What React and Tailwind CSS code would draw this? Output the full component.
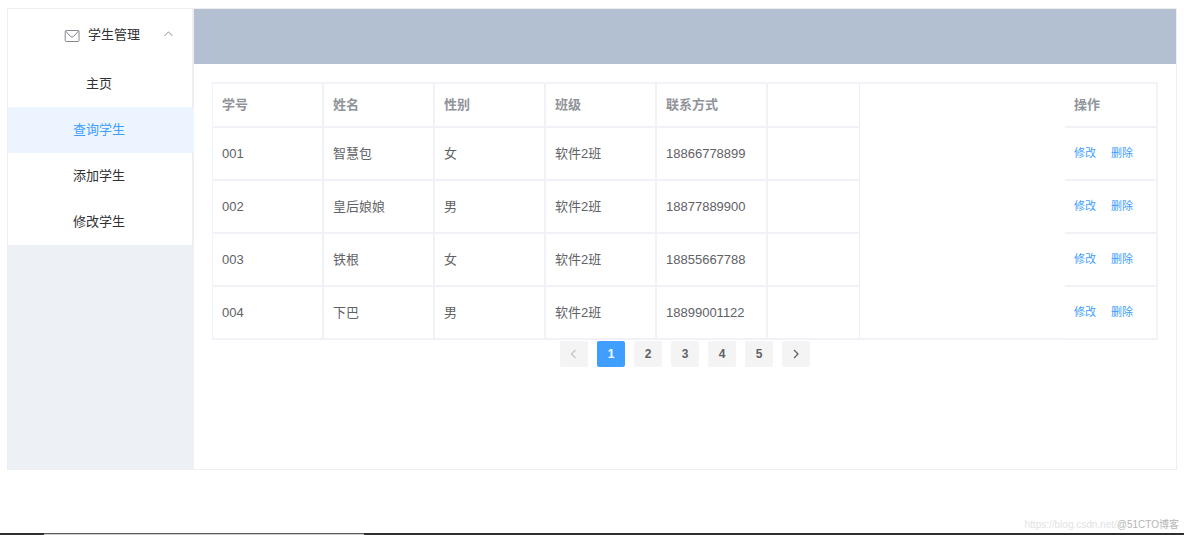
import { useState } from 'react'

const menu = ['主页', '查询学生', '添加学生', '修改学生']

const columns = ['学号', '姓名', '性别', '班级', '联系方式']

const students = [
  { id: '001', name: '智慧包', sex: '女', clazz: '软件2班', phone: '18866778899' },
  { id: '002', name: '皇后娘娘', sex: '男', clazz: '软件2班', phone: '18877889900' },
  { id: '003', name: '铁根', sex: '女', clazz: '软件2班', phone: '18855667788' },
  { id: '004', name: '下巴', sex: '男', clazz: '软件2班', phone: '18899001122' },
]

function Sidebar({ active, onSelect }) {
  return (
    <aside className="w-[186px] shrink-0 bg-[#edf1f6]">
      <nav className="bg-white text-[13px] text-[#303133]">
        <button className="flex h-[52px] w-full items-center border-r-2 border-[#eeeeee] pr-[18px] pl-14">
          <svg className="mt-0.5 mr-2 h-4 w-4 shrink-0" viewBox="0 0 16 16" fill="none" stroke="#85888e">
            <rect x="1.2" y="2.5" width="13.8" height="11" rx="1" />
            <path d="M1.6 3 6.2 8.2Q8 10 9.8 8.2L14.6 3" />
          </svg>
          学生管理
          <svg className="mb-1 ml-auto h-[11px] w-[11px]" viewBox="0 0 11 11" fill="none" stroke="#909399">
            <path d="M1.5 8 5.5 3.8 9.5 8" />
          </svg>
        </button>
        {menu.map(item => (
          <button
            key={item}
            onClick={() => onSelect(item)}
            className={
              item === active
                ? 'block h-[46px] w-full bg-[#ecf5ff] pr-1 text-center text-[#409eff]'
                : 'block h-[46px] w-full border-r-2 border-[#eeeeee] pr-0.5 text-center'
            }
          >
            {item}
          </button>
        ))}
      </nav>
    </aside>
  )
}

function StudentTable() {
  return (
    <table className="w-full table-fixed border-separate border-spacing-0 border-t-2 border-r-2 border-l border-[#f1f3f8] text-left text-[13px] text-[#606266]">
      <colgroup>
        <col className="w-[111px]" />
        <col className="w-[111px]" />
        <col className="w-[111px]" />
        <col className="w-[111px]" />
        <col className="w-[111px]" />
        <col className="w-[92px]" />
        <col />
        <col className="w-[91px]" />
      </colgroup>
      <thead className="text-[#909399]">
        <tr className="h-11">
          {columns.map(c => (
            <th key={c} className="border-r-2 border-b-2 border-[#f0f2f8] px-[9px] font-bold">{c}</th>
          ))}
          <th className="border-r border-b-2 border-r-[#ebeef5] border-b-[#f0f2f8]"></th>
          <th></th>
          <th className="border-b-2 border-[#f0f2f8] px-[9px] font-bold">操作</th>
        </tr>
      </thead>
      <tbody>
        {students.map((s, i) => (
          <tr key={s.id} className="h-[53px]">
            {[s.id, s.name, s.sex, s.clazz, s.phone].map((v, j) => (
              <td key={j} className="border-r-2 border-b-2 border-[#f0f2f8] px-[9px]">{v}</td>
            ))}
            <td className="border-r border-b-2 border-r-[#ebeef5] border-b-[#f0f2f8]"></td>
            <td className={i === students.length - 1 ? 'border-b-2 border-[#f1f3f8]' : ''}></td>
            <td className="border-b-2 border-[#f0f2f8] px-[9px] text-[11px] whitespace-nowrap text-[#409eff]">
              <button className="mr-[15px]">修改</button>
              <button>删除</button>
            </td>
          </tr>
        ))}
      </tbody>
    </table>
  )
}

function Pagination({ page, onChange }) {
  return (
    <div className="mt-px flex justify-center gap-[9px] text-[12px] font-bold text-[#606266]">
      <button
        aria-label="上一页"
        disabled={page === 1}
        onClick={() => onChange(page - 1)}
        className="flex h-[26px] w-7 items-center justify-center rounded-xs bg-[#f4f4f5] disabled:text-[#c0c4cc]"
      >
        <svg className="h-[10px] w-[10px]" viewBox="0 0 10 10" fill="none" stroke="currentColor" strokeWidth="1.3">
          <path d="M6.5 1 2.5 5 6.5 9" />
        </svg>
      </button>
      {[1, 2, 3, 4, 5].map(n => (
        <button
          key={n}
          onClick={() => onChange(n)}
          className={
            n === page
              ? 'h-[26px] w-7 rounded-xs bg-[#409eff] text-white'
              : 'h-[26px] w-7 rounded-xs bg-[#f4f4f5]'
          }
        >
          {n}
        </button>
      ))}
      <button
        aria-label="下一页"
        disabled={page === 5}
        onClick={() => onChange(page + 1)}
        className="flex h-[26px] w-7 items-center justify-center rounded-xs bg-[#f4f4f5] disabled:text-[#c0c4cc]"
      >
        <svg className="h-[10px] w-[10px]" viewBox="0 0 10 10" fill="none" stroke="currentColor" strokeWidth="1.3">
          <path d="M3 1 7 5 3 9" />
        </svg>
      </button>
    </div>
  )
}

export default function App() {
  const [active, setActive] = useState('查询学生')
  const [page, setPage] = useState(1)

  return (
    <div className="flex min-h-screen flex-col bg-white font-['Liberation_Sans','Noto_Sans_CJK_SC',sans-serif]">
      <div className="mx-[7px] mt-2 flex min-h-[462px] border border-[#eeeeee]">
        <Sidebar active={active} onSelect={setActive} />
        <div className="min-w-0 flex-1">
          <header className="h-[55px] bg-[#b3c0d1]"></header>
          <main className="px-[18px] pt-[18px] pb-5">
            <StudentTable />
            <Pagination page={page} onChange={setPage} />
          </main>
        </div>
      </div>

      <footer className="mt-auto">
        <div className="flex justify-end pr-[5px] text-[10px] leading-4">
          <span className="text-[#e2e2e2]">https://blog.csdn.net/</span>
          <span className="text-[#b5b5b5]">@51CTO博客</span>
        </div>
        <div className="flex h-0.5 bg-[#2f2f2f]">
          <div className="ml-11 w-[27%] border-t border-[#5a5a5a] bg-[#d0cecd]"></div>
        </div>
      </footer>
    </div>
  )
}
